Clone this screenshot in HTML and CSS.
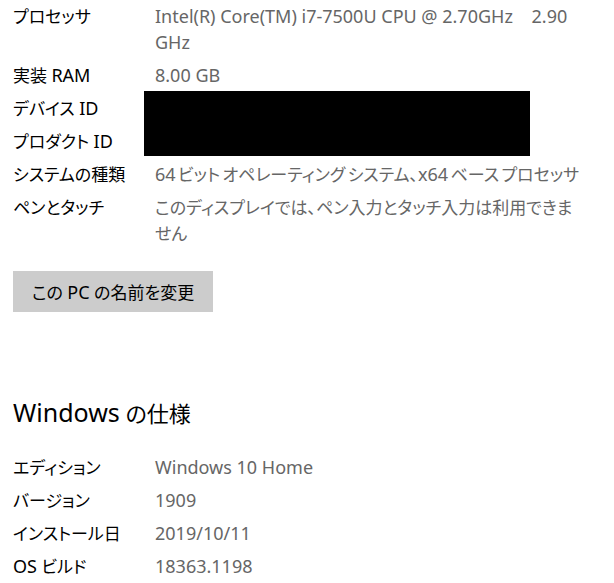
FILE: index.html
```html
<!DOCTYPE html>
<html lang="ja">
<head>
<meta charset="utf-8">
<title>バージョン情報</title>
<link rel="stylesheet" href="styles.css">
</head>
<body>
<main class="page">
  <section class="specs">
    <dl class="rows">
      <div class="row"><dt>プロセッサ</dt><dd><span class="en">Intel(R) Core(TM) i7-7500U CPU @ 2.70GHz&nbsp;&nbsp;&nbsp; 2.90 GHz</span></dd></div>
      <div class="row"><dt>実装 <span class="en">RAM</span></dt><dd><span class="en">8.00 GB</span></dd></div>
      <div class="row"><dt>デバイス <span class="en">ID</span></dt><dd>&nbsp;</dd></div>
      <div class="row"><dt>プロダクト <span class="en">ID</span></dt><dd>&nbsp;</dd></div>
      <div class="row"><dt>システムの種類</dt><dd><span class="en">64</span> ビット オペレーティング システム、<span class="en">x64</span> ベース プロセッサ</dd></div>
      <div class="row"><dt>ペンとタッチ</dt><dd>このディスプレイでは、ペン入力とタッチ入力は利用できません</dd></div>
    </dl>
    <div class="redact"></div>
  </section>
  <button class="rename" type="button">この <span class="en">PC</span> の名前を変更</button>
  <h2 class="heading"><span class="en">Windows</span> の仕様</h2>
  <dl class="rows">
    <div class="row"><dt>エディション</dt><dd><span class="en">Windows 10 Home</span></dd></div>
    <div class="row"><dt>バージョン</dt><dd><span class="en">1909</span></dd></div>
    <div class="row"><dt>インストール日</dt><dd><span class="en">2019/10/11</span></dd></div>
    <div class="row"><dt><span class="en">OS</span> ビルド</dt><dd><span class="en">18363.1198</span></dd></div>
  </dl>
</main>
</body>
</html>
```

FILE: styles.css
```css
html, body {
  margin: 0;
  padding: 0;
  background: #ffffff;
}
body {
  font-family: "Noto Sans", "Noto Sans CJK JP", sans-serif;
  font-size: 17px;
  font-feature-settings: "palt";
  color: #000000;
}
.en {
  font-size: 18px;
  line-height: 1;
  word-spacing: normal;
}
.page {
  padding: 4px 0 0 13px;
}
.specs {
  position: relative;
}
.rows {
  margin: 0;
  display: flex;
  flex-direction: column;
  gap: 7px;
}
.row {
  display: grid;
  grid-template-columns: 142px 428px;
  line-height: 26px;
}
.row dt {
  margin: 0;
  color: #000000;
}
.row dd {
  margin: 0;
  color: #666666;
  word-spacing: -2px;
}
.redact {
  position: absolute;
  left: 131px;
  top: 87px;
  width: 386px;
  height: 65px;
  background: #000000;
}
.rename {
  display: block;
  margin-top: 24px;
  width: 200px;
  height: 41px;
  border: none;
  padding: 0;
  background: #cccccc;
  color: #000000;
  font-family: "Noto Sans", "Noto Sans CJK JP", sans-serif;
  font-size: 17px;
  font-feature-settings: "palt";
}
.heading {
  margin: 86px 0 27px;
  font-weight: normal;
  font-size: 22px;
  line-height: 30px;
  color: #000000;
}
.heading .en {
  font-size: 25px;
}
```
